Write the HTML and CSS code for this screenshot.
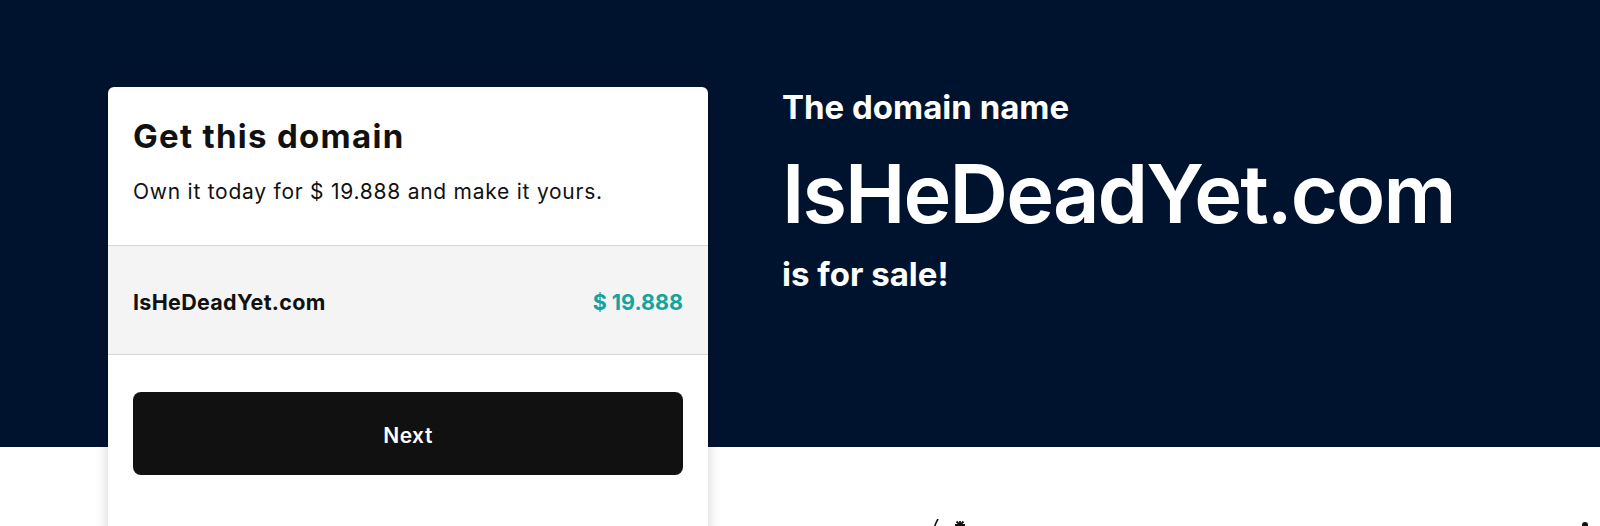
FILE: index.html
```html
<!DOCTYPE html>
<html lang="en">
<head>
<meta charset="utf-8">
<title>IsHeDeadYet.com is for sale</title>
<link rel="stylesheet" href="styles.css">
</head>
<body>
<section class="hero">
  <div class="hero-inner">
    <div class="card">
      <div class="card-head">
        <h2 class="card-title">Get this domain</h2>
        <p class="card-sub">Own it today for $ 19.888 and make it yours.</p>
      </div>
      <div class="card-row">
        <span class="row-domain">IsHeDeadYet.com</span>
        <span class="row-price">$ 19.888</span>
      </div>
      <div class="card-action">
        <button class="btn-next" type="button">Next</button>
      </div>
    </div>
    <div class="hero-text">
      <p class="lead">The domain name</p>
      <h1 class="domain">IsHeDeadYet.com</h1>
      <p class="lead sale">is for sale!</p>
    </div>
  </div>
</section>
<section class="below">
  <svg class="doodle doodle-a" width="40" height="10" viewBox="0 0 40 10">
    <path d="M8 0 Q5 5 4 10" stroke="#111" stroke-width="1.6" fill="none"/>
    <path d="M30 2 L30 10 M25 6 L35 6 M26.5 2.5 L33.5 9.5 M33.5 2.5 L26.5 9.5" stroke="#111" stroke-width="1.8" fill="none"/>
  </svg>
  <svg class="doodle doodle-b" width="10" height="6" viewBox="0 0 10 6">
    <circle cx="5" cy="5" r="3" fill="#111"/>
  </svg>
</section>
</body>
</html>
```

FILE: styles.css
```css
* { box-sizing: border-box; }
html, body { margin: 0; padding: 0; }
body {
  font-family: Inter, "Noto Sans", "Liberation Sans", sans-serif;
  background: #fff;
  color: #111;
  overflow: hidden;
  height: 526px;
}
.hero {
  background: #00132e;
  height: 447px;
}
.hero-inner {
  display: flex;
  align-items: flex-start;
  gap: 74px;
  padding: 87px 0 0 108px;
}
.card {
  width: 600px;
  flex: none;
  background: #fff;
  border-radius: 6px;
  box-shadow: 0 2px 14px rgba(0, 0, 0, 0.18);
  height: 460px;
}
.card-head {
  padding: 29px 25px 0;
  height: 159px;
  border-bottom: 1px solid #d6d6d6;
}
.card-title {
  margin: 0;
  font-size: 33px;
  line-height: 40px;
  font-weight: 700;
  letter-spacing: 1.3px;
}
.card-sub {
  margin: 22px 0 0;
  font-size: 21px;
  line-height: 28px;
  font-weight: 400;
  letter-spacing: 0.75px;
}
.card-row {
  display: flex;
  justify-content: space-between;
  align-items: center;
  height: 109px;
  padding: 4px 25px 0;
  background: #f4f4f4;
  border-bottom: 1px solid #d6d6d6;
}
.row-domain {
  font-size: 21.5px;
  font-weight: 700;
  letter-spacing: 0.3px;
}
.row-price {
  font-size: 21.5px;
  font-weight: 700;
  color: #17a39d;
  letter-spacing: 0px;
}
.card-action {
  padding: 37px 25px 0;
}
.btn-next {
  display: block;
  width: 100%;
  height: 83px;
  padding-top: 4px;
  border: none;
  border-radius: 8px;
  background: #111;
  color: #fff;
  font-family: inherit;
  font-size: 21px;
  font-weight: 600;
  letter-spacing: 0.5px;
}
.hero-text {
  color: #fff;
  padding-top: 0;
}
.lead {
  margin: 0;
  font-size: 33px;
  line-height: 40px;
  font-weight: 700;
}
.domain {
  margin: 22px 0 0;
  font-size: 81px;
  line-height: 90px;
  font-weight: 600;
  letter-spacing: -1.9px;
}
.sale {
  margin-top: 15px;
}
.below {
  position: relative;
  height: 79px;
}
.doodle { position: absolute; }
.doodle-a { left: 930px; top: 72px; }
.doodle-b { left: 1580px; top: 73px; }
```
